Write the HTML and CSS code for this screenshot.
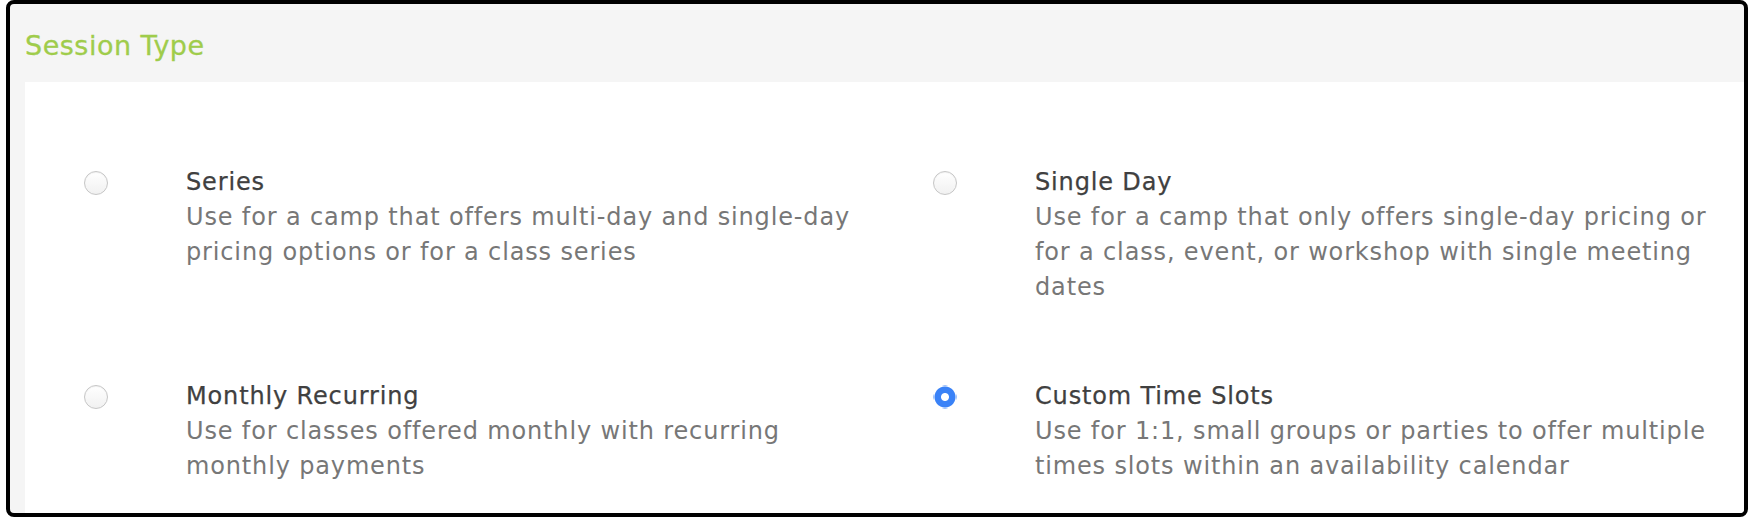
FILE: index.html
```html
<!DOCTYPE html>
<html lang="en">
<head>
  <meta charset="UTF-8" />
  <meta name="viewport" content="width=device-width, initial-scale=1.0" />
  <title>Session Type</title>
  <link rel="stylesheet" href="styles.css">
</head>
<body>
  <div class="card">
    <div class="card-header">
      <h2>Session Type</h2>
    </div>

    <div class="card-body">
      <div class="options">
        <!-- Row 1 -->
        <label class="option">
          <input type="radio" name="session-type" value="series" />
          <span class="option-text">
            <span class="option-title">Series</span>
            <span class="option-desc">Use for a camp that offers multi-day and single-day pricing options or for a class series</span>
          </span>
        </label>

        <label class="option">
          <input type="radio" name="session-type" value="single-day" />
          <span class="option-text">
            <span class="option-title">Single Day</span>
            <span class="option-desc">Use for a camp that only offers single-day pricing or for a class, event, or workshop with single meeting dates</span>
          </span>
        </label>

        <!-- Row 2 -->
        <label class="option">
          <input type="radio" name="session-type" value="monthly" />
          <span class="option-text">
            <span class="option-title">Monthly Recurring</span>
            <span class="option-desc">Use for classes offered monthly with recurring monthly payments</span>
          </span>
        </label>

        <label class="option">
          <input type="radio" name="session-type" value="time-slots" checked />
          <span class="option-text">
            <span class="option-title">Custom Time Slots</span>
            <span class="option-desc">Use for 1:1, small groups or parties to offer multiple times slots within an availability calendar</span>
          </span>
        </label>
      </div>
    </div>
  </div>
</body>
</html>
```

FILE: styles.css
```css
body {
  margin: 0;
  background-color: #fff;
  font-family: 'DejaVu Sans', sans-serif;
}
.card {
  box-sizing: border-box;
  width: 1742px;
  height: 517px;
  margin-left: 6px;
  border: 4px solid #000;
  border-radius: 8px;
  background-color: #f5f5f5;
  padding-left: 15px;
  display: flex;
  flex-direction: column;
  overflow: hidden;
}
.card-header {
  height: 78px;
  box-sizing: border-box;
  padding-top: 27px;
}
.card-header h2 {
  margin: 0;
  font-size: 27px;
  line-height: 30px;
  font-weight: normal;
  letter-spacing: 0.5px;
  color: #9fcc4b;
  -webkit-text-stroke: 0.3px currentColor;
}
.card-body {
  flex: 1;
  background-color: #fff;
}
.options {
  display: grid;
  grid-template-columns: 849px 1fr;
  row-gap: 74px;
  padding: 83px 0 0 59px;
}
.option {
  display: flex;
  align-items: flex-start;
  gap: 78px;
  cursor: pointer;
}
.option input {
  appearance: none;
  -webkit-appearance: none;
  box-sizing: border-box;
  flex: none;
  width: 24px;
  height: 24px;
  margin: 6px 0 0;
  border: 1px solid #c6c6c6;
  border-radius: 50%;
  background: linear-gradient(#fff, #f1f1f1);
  box-shadow: inset 0 1px 1px rgba(0, 0, 0, 0.05);
}
.option input:checked {
  border-color: transparent;
  box-shadow: none;
  background: radial-gradient(circle, #fff 0 3.5px, #3a82f7 4.5px 10px, transparent 11px);
}
.option-text {
  display: flex;
  flex-direction: column;
  max-width: 690px;
  font-size: 24px;
  letter-spacing: 0.85px;
}
.option-title {
  line-height: 35px;
  color: #404040;
  -webkit-text-stroke: 0.25px currentColor;
}
.option-desc {
  line-height: 35px;
  color: #777;
}
```
